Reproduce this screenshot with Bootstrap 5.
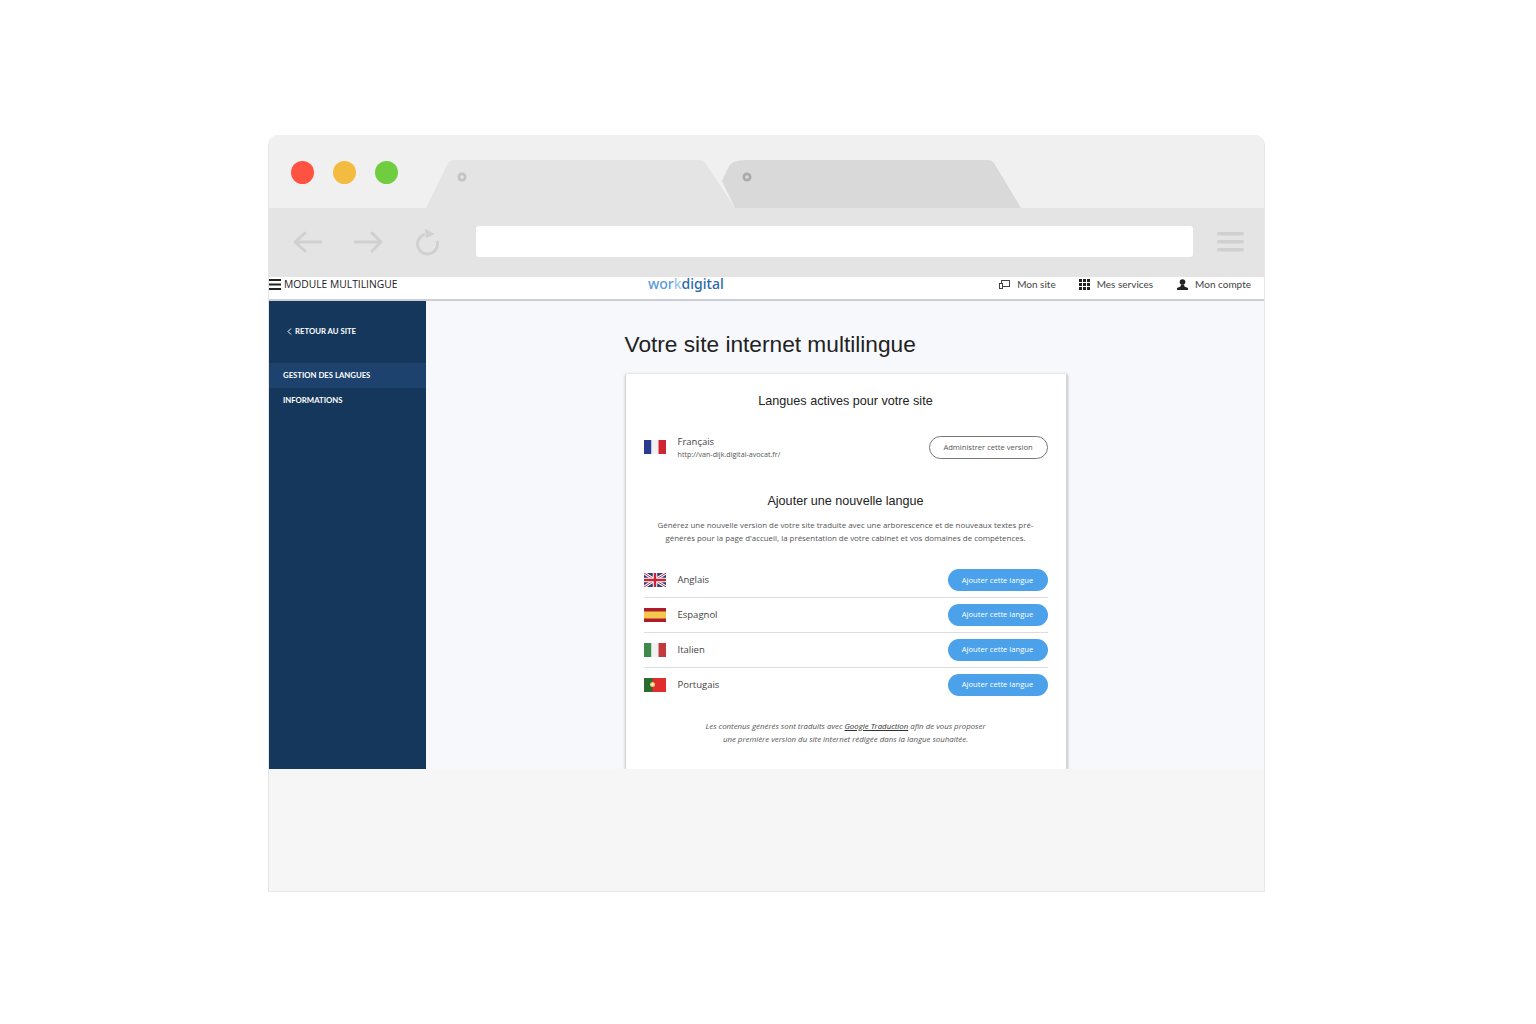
<!DOCTYPE html>
<html lang="fr">
<head>
    <meta charset="UTF-8">
    <meta name="viewport" content="width=device-width, initial-scale=1.0">
    <title>Module multilingue</title>
    <link href="https://cdn.jsdelivr.net/npm/bootstrap@5.3.0/dist/css/bootstrap.min.css" rel="stylesheet">
    <style>
        body { background: #fff; font-family: "Open Sans", sans-serif; color: #333; padding: 135px 0 0 268px; }
        .browser { width: 997px; height: 757px; border-radius: 10px 10px 0 0; overflow: hidden; background: #f6f6f6; border: solid #e6e6e6; border-width: 0 1px 1px 1px; }
        .chrome-top { height: 73px; background: #f0f0f0; }
        .light { width: 23px; height: 23px; border-radius: 50%; }
        .lights { padding: 26px 0 0 22px; gap: 19px; width: 157px; }
        .tabs-svg { display: block; margin-top: 25px; }
        .chrome-bar { height: 69px; background: #e4e4e4; padding: 0 0 1px 23px; }
        .addr { width: 717px; height: 31px; background: #fff; border-radius: 3px; margin: 0 0 2px 34px; }
        .top-nav { height: 24px; background: #fff; border-bottom: 2px solid #ccced3; padding-bottom: 7px; }
        .mod-title { font-size: 10.3px; color: #222; margin-left: 3px; }
        .brand { font-family: "Noto Sans", sans-serif; font-size: 14px; font-weight: 500; color: #2a69ac; position: absolute; left: 379px; top: -3px; line-height: 20px; }
        .brand-w { color: #5b9bd8; }
        .brand-k { color: #9cc4ec; }
        .nav-side { font-family: Lato, sans-serif; font-size: 10px; color: #444; padding-right: 13px; }
        .nav-gap-a { margin-left: 23px; }
        .nav-gap-b { margin-left: 24px; }
        .nav-label { margin-left: 7px; }
        .app-body { height: 468px; overflow: hidden; }
        .side { width: 157px; flex: none; background: #15375b; color: #fff; font-family: Lato, sans-serif; font-weight: 700; font-size: 7.75px; }
        .back { padding: 25px 0 0 18px; height: 62px; }
        .back-chevron { margin: 2px 3px 0 0; }
        .side-item { height: 25px; padding-left: 14px; }
        .side-item.on { background: #1c426d; }
        .main-area { background: #f6f8fc; }
        .page-title { font-family: "Liberation Sans", sans-serif; font-size: 22.7px; font-weight: 400; color: #222; margin: 28px 0 15px 2px; line-height: 30px; width: 443px; }
        .lang-card { width: 443px; height: 396px; flex: none; margin-left: 2px; background: #fff; border: solid #d5d5d5; border-width: 0 2px 0 1px; box-shadow: 0 0 3px rgba(0,0,0,.18); border-radius: 2px 2px 0 0; padding: 0 18px; }
        .sec-title { font-family: "Liberation Sans", sans-serif; font-size: 12.6px; font-weight: 400; text-align: center; color: #222; line-height: 16px; margin: 0; }
        .flag { width: 22px; height: 14px; display: block; flex: none; }
        .lang-name { font-size: 9.5px; color: #444; margin-left: 12px; }
        .lang-url { font-size: 7.15px; color: #555; line-height: 9px; }
        .btn-admin { font-size: 7.6px; color: #555; border: 1px solid #777; border-radius: 12px; width: 119px; height: 23px; padding: 1px 0 0; background: #fff; }
        .btn-add { font-size: 7.6px; color: #fff; background: #4ca2ea; border: 0; border-radius: 12px; width: 100px; height: 22px; padding: 0; }
        .intro { font-size: 7.92px; line-height: 13px; text-align: center; color: #555; margin: 10px 0 0; }
        .lang-list { margin-top: 18.5px; }
        .lang-row { height: 34.7px; border-bottom: 1px solid #ddd; }
        .lang-row:last-child { border-bottom: 0; }
        .note { font-size: 7.85px; line-height: 13px; font-style: italic; text-align: center; color: #555; margin: 17.5px 0 0; }
        .note u { color: #333; }
    </style>
</head>
<body>
    <div class="browser">
        <div class="chrome-top d-flex">
            <div class="lights d-flex">
                <div class="light" style="background:#ff5240"></div>
                <div class="light" style="background:#f3bb40"></div>
                <div class="light" style="background:#70cd40"></div>
            </div>
            <svg class="tabs-svg" width="600" height="48" viewBox="0 0 600 48">
                <path d="M296 21 L309 48 H595 L568 3 Q566 0 561 0 H320 Q307 0 303 6 Z" fill="#d9d9d9"/>
                <path d="M0 48 L21 5 Q23 0 29 0 H272 Q277 0 280 4 L309 48 Z" fill="#e4e4e4"/>
                <circle cx="36" cy="17" r="4.5" fill="#c4c4c4"/>
                <circle cx="36" cy="17" r="1.8" fill="#e4e4e4"/>
                <circle cx="321" cy="17" r="4.5" fill="#ababab"/>
                <circle cx="321" cy="17" r="1.8" fill="#d9d9d9"/>
            </svg>
        </div>
        <div class="chrome-bar d-flex align-items-center">
            <svg width="30" height="24" viewBox="0 0 30 24" fill="none" stroke="#d0d0d0" stroke-width="3" stroke-linecap="round" stroke-linejoin="round"><path d="M3 12 H29 M13 3 L3 12 L13 21"/></svg>
            <svg width="30" height="24" viewBox="0 0 30 24" fill="none" stroke="#d0d0d0" stroke-width="3" stroke-linecap="round" stroke-linejoin="round" style="margin-left:31px"><path d="M2 12 H28 M19 3 L28 12 L19 21"/></svg>
            <svg width="26" height="28" viewBox="0 0 26 28" fill="none" stroke="#d0d0d0" stroke-width="2.8" style="margin-left:33px"><path d="M9 6.3 A10 10 0 1 0 21 13"/><path d="M9 1 L19 6 L10 10 Z" fill="#d0d0d0" stroke="none"/></svg>
            <div class="addr"></div>
            <svg width="27" height="20" viewBox="0 0 27 20" fill="#d0d0d0" style="margin-left:24px"><rect width="27" height="3.4" rx="1.5"/><rect y="8" width="27" height="3.4" rx="1.5"/><rect y="16" width="27" height="3.4" rx="1.5"/></svg>
        </div>
        <div class="top-nav d-flex align-items-center position-relative">
            <svg width="12" height="11" viewBox="0 0 12 11" fill="#222"><rect width="12" height="2"/><rect y="4.5" width="12" height="2"/><rect y="9" width="12" height="2"/></svg>
            <span class="mod-title">MODULE MULTILINGUE</span>
            <span class="brand"><span class="brand-w">wor</span><span class="brand-k">k</span>digital</span>
            <div class="nav-side d-flex align-items-center ms-auto">
                <svg width="11" height="9" viewBox="0 0 11 9" fill="none" stroke="#444"><rect x="2.5" y=".5" width="8" height="6"/><rect x=".5" y="3.5" width="3" height="5" fill="#fff"/></svg>
                <span class="nav-label">Mon site</span>
                <svg class="nav-gap-a" width="11" height="11" viewBox="0 0 11 11" fill="#222"><rect width="3" height="3"/><rect x="4" width="3" height="3"/><rect x="8" width="3" height="3"/><rect y="4" width="3" height="3"/><rect x="4" y="4" width="3" height="3"/><rect x="8" y="4" width="3" height="3"/><rect y="8" width="3" height="3"/><rect x="4" y="8" width="3" height="3"/><rect x="8" y="8" width="3" height="3"/></svg>
                <span class="nav-label">Mes services</span>
                <svg class="nav-gap-b" width="11" height="11" viewBox="0 0 11 11" fill="#222"><circle cx="5.5" cy="3" r="2.8"/><path d="M4 5.5 H7 L7.5 7.5 L11 9 V11 H0 V9 L3.5 7.5 Z"/></svg>
                <span class="nav-label">Mon compte</span>
            </div>
        </div>
        <div class="app-body d-flex">
            <div class="side">
                <div class="back d-flex align-items-start">
                    <svg class="back-chevron" width="5" height="7" viewBox="0 0 5 7" fill="none" stroke="#fff"><path d="M4 .5 L1 3.5 L4 6.5"/></svg>
                    <span>RETOUR AU SITE</span>
                </div>
                <div class="side-item on d-flex align-items-center">GESTION DES LANGUES</div>
                <div class="side-item d-flex align-items-center">INFORMATIONS</div>
            </div>
            <div class="main-area flex-grow-1 d-flex flex-column align-items-center">
                <h1 class="page-title">Votre site internet multilingue</h1>
                <div class="lang-card">
                    <h2 class="sec-title" style="padding-top:19px">Langues actives pour votre site</h2>
                    <div class="d-flex align-items-center" style="margin-top:26px;height:24px">
                        <svg class="flag" viewBox="0 0 22 14"><rect width="7.5" height="14" fill="#2b3b8f"/><rect x="7.5" width="7" height="14" fill="#f1f1f1"/><rect x="14.5" width="7.5" height="14" fill="#cf2434"/></svg>
                        <div class="lang-name">Français<div class="lang-url">http://van-dijk.digital-avocat.fr/</div></div>
                        <button class="btn-admin btn ms-auto" type="button">Administrer cette version</button>
                    </div>
                    <h2 class="sec-title" style="margin-top:34px">Ajouter une nouvelle langue</h2>
                    <p class="intro">Générez une nouvelle version de votre site traduite avec une arborescence et de nouveaux textes pré-<br>générés pour la page d'accueil, la présentation de votre cabinet et vos domaines de compétences.</p>
                    <div class="lang-list">
                        <div class="lang-row d-flex align-items-center">
                            <svg class="flag" viewBox="0 0 22 14"><rect width="22" height="14" fill="#2a3b7d"/><path d="M0 0 L22 14 M22 0 L0 14" stroke="#fff" stroke-width="3"/><path d="M0 0 L22 14 M22 0 L0 14" stroke="#c8243a" stroke-width="1"/><path d="M11 0 V14 M0 7 H22" stroke="#fff" stroke-width="4.5"/><path d="M11 0 V14 M0 7 H22" stroke="#c8243a" stroke-width="2.5"/></svg>
                            <span class="lang-name">Anglais</span>
                            <button class="btn-add btn ms-auto" type="button">Ajouter cette langue</button>
                        </div>
                        <div class="lang-row d-flex align-items-center">
                            <svg class="flag" viewBox="0 0 22 14"><rect width="22" height="14" fill="#ab1d2b"/><rect y="3.5" width="22" height="7" fill="#f3c84c"/></svg>
                            <span class="lang-name">Espagnol</span>
                            <button class="btn-add btn ms-auto" type="button">Ajouter cette langue</button>
                        </div>
                        <div class="lang-row d-flex align-items-center">
                            <svg class="flag" viewBox="0 0 22 14"><rect width="7.5" height="14" fill="#3d8a4a"/><rect x="7.5" width="7" height="14" fill="#f1f1f1"/><rect x="14.5" width="7.5" height="14" fill="#c23a3c"/></svg>
                            <span class="lang-name">Italien</span>
                            <button class="btn-add btn ms-auto" type="button">Ajouter cette langue</button>
                        </div>
                        <div class="lang-row d-flex align-items-center">
                            <svg class="flag" viewBox="0 0 22 14"><rect width="22" height="14" fill="#df2e2c"/><rect width="8.5" height="14" fill="#2f6a2f"/><circle cx="8.5" cy="6.5" r="2.5" fill="#e8c860"/><circle cx="8.5" cy="6.5" r="1.3" fill="#f2f2f2"/></svg>
                            <span class="lang-name">Portugais</span>
                            <button class="btn-add btn ms-auto" type="button">Ajouter cette langue</button>
                        </div>
                    </div>
                    <p class="note">Les contenus générés sont traduits avec <u>Google Traduction</u> afin de vous proposer<br>une première version du site internet rédigée dans la langue souhaitée.</p>
                </div>
            </div>
        </div>
    </div>
    <script src="https://cdn.jsdelivr.net/npm/bootstrap@5.3.0/dist/js/bootstrap.bundle.min.js"></script>
</body>
</html>
